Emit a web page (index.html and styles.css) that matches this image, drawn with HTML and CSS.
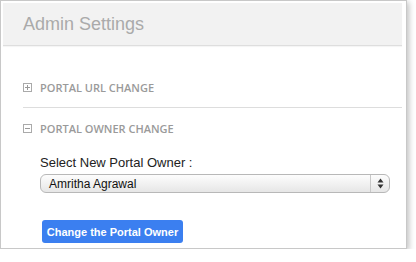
FILE: index.html
```html
<!DOCTYPE html>
<html>
<head>
<meta charset="utf-8">
<link rel="stylesheet" href="styles.css">
</head>
<body>
<div class="panel">
  <div class="header">Admin Settings</div>
  <div class="content">
    <div class="section">
      <span class="toggle"><svg width="9" height="9" viewBox="0 0 9 9"><rect x="0.5" y="0.5" width="8" height="8" fill="#fff" stroke="#aaa"/><path d="M2 4.5h5M4.5 2v5" stroke="#999"/></svg></span>
      <span class="label">PORTAL URL CHANGE</span>
    </div>
    <div class="divider"></div>
    <div class="section">
      <span class="toggle"><svg width="9" height="9" viewBox="0 0 9 9"><rect x="0.5" y="0.5" width="8" height="8" fill="#fff" stroke="#aaa"/><path d="M2 4.5h5" stroke="#999"/></svg></span>
      <span class="label">PORTAL OWNER CHANGE</span>
    </div>
    <div class="form">
      <div class="field-label">Select New Portal Owner :</div>
      <div class="select">
        <span class="select-text">Amritha Agrawal</span>
        <span class="select-arrow"><svg width="7" height="11" viewBox="0 0 7 11"><path d="M3.5 0.5L6.5 4.5H0.5Z" fill="#333"/><path d="M3.5 10.5L6.5 6.5H0.5Z" fill="#333"/></svg></span>
      </div>
      <button class="btn">Change the Portal Owner</button>
    </div>
  </div>
</div>
</body>
</html>
```

FILE: styles.css
```css
html, body {
  margin: 0;
  padding: 0;
  background: #fff;
}
.panel {
  box-sizing: border-box;
  width: 407px;
  height: 249px;
  border: 1px solid #c8c8c8;
  padding: 2px 4px 0 2px;
  background: #fff;
  box-shadow: 2px 2px 6px rgba(0,0,0,0.25);
}
.header {
  height: 42px;
  background: #f2f2f2;
  border-bottom: 1px solid #dedede;
  box-shadow: 0 1px 1px rgba(0,0,0,0.04);
  padding-left: 20px;
  display: flex;
  align-items: center;
  font-family: "Liberation Sans", Arial, sans-serif;
  font-size: 18px;
  color: #aaaaaa;
}
.content {
  padding-left: 20px;
}
.section {
  display: flex;
  align-items: center;
  height: 16px;
}
.section:first-child {
  margin-top: 33px;
}
.toggle {
  width: 9px;
  height: 9px;
  display: flex;
  margin-right: 8px;
}
.label {
  font-family: "Open Sans", sans-serif;
  font-weight: 600;
  font-size: 11px;
  color: #9a9a9a;
}
.divider {
  height: 1px;
  background: #dddddd;
  margin: 12px 0 12px 0;
}
.form {
  padding-left: 17px;
  padding-top: 19px;
}
.field-label {
  font-family: "Liberation Sans", Arial, sans-serif;
  font-size: 13px;
  line-height: 16px;
  color: #222;
}
.select {
  box-sizing: border-box;
  margin-top: 3px;
  width: 350px;
  height: 19px;
  border: 1px solid #b8b8b8;
  border-radius: 6px;
  background: linear-gradient(#fdfdfd, #e6e6e6);
  display: flex;
  align-items: center;
  font-family: "Liberation Sans", Arial, sans-serif;
  font-size: 12px;
  color: #111;
}
.select-text {
  flex: 1;
  padding-left: 8px;
}
.select-arrow {
  width: 18px;
  height: 100%;
  border-left: 1px solid #c8c8c8;
  display: flex;
  align-items: center;
  justify-content: center;
}
.btn {
  margin-top: 27px;
  margin-left: 2px;
  width: 141px;
  height: 23px;
  border: none;
  border-radius: 3px;
  background: #3b7ff0;
  color: #fff;
  font-family: "Liberation Sans", Arial, sans-serif;
  font-weight: bold;
  font-size: 11px;
  padding: 0;
  display: block;
}
```
